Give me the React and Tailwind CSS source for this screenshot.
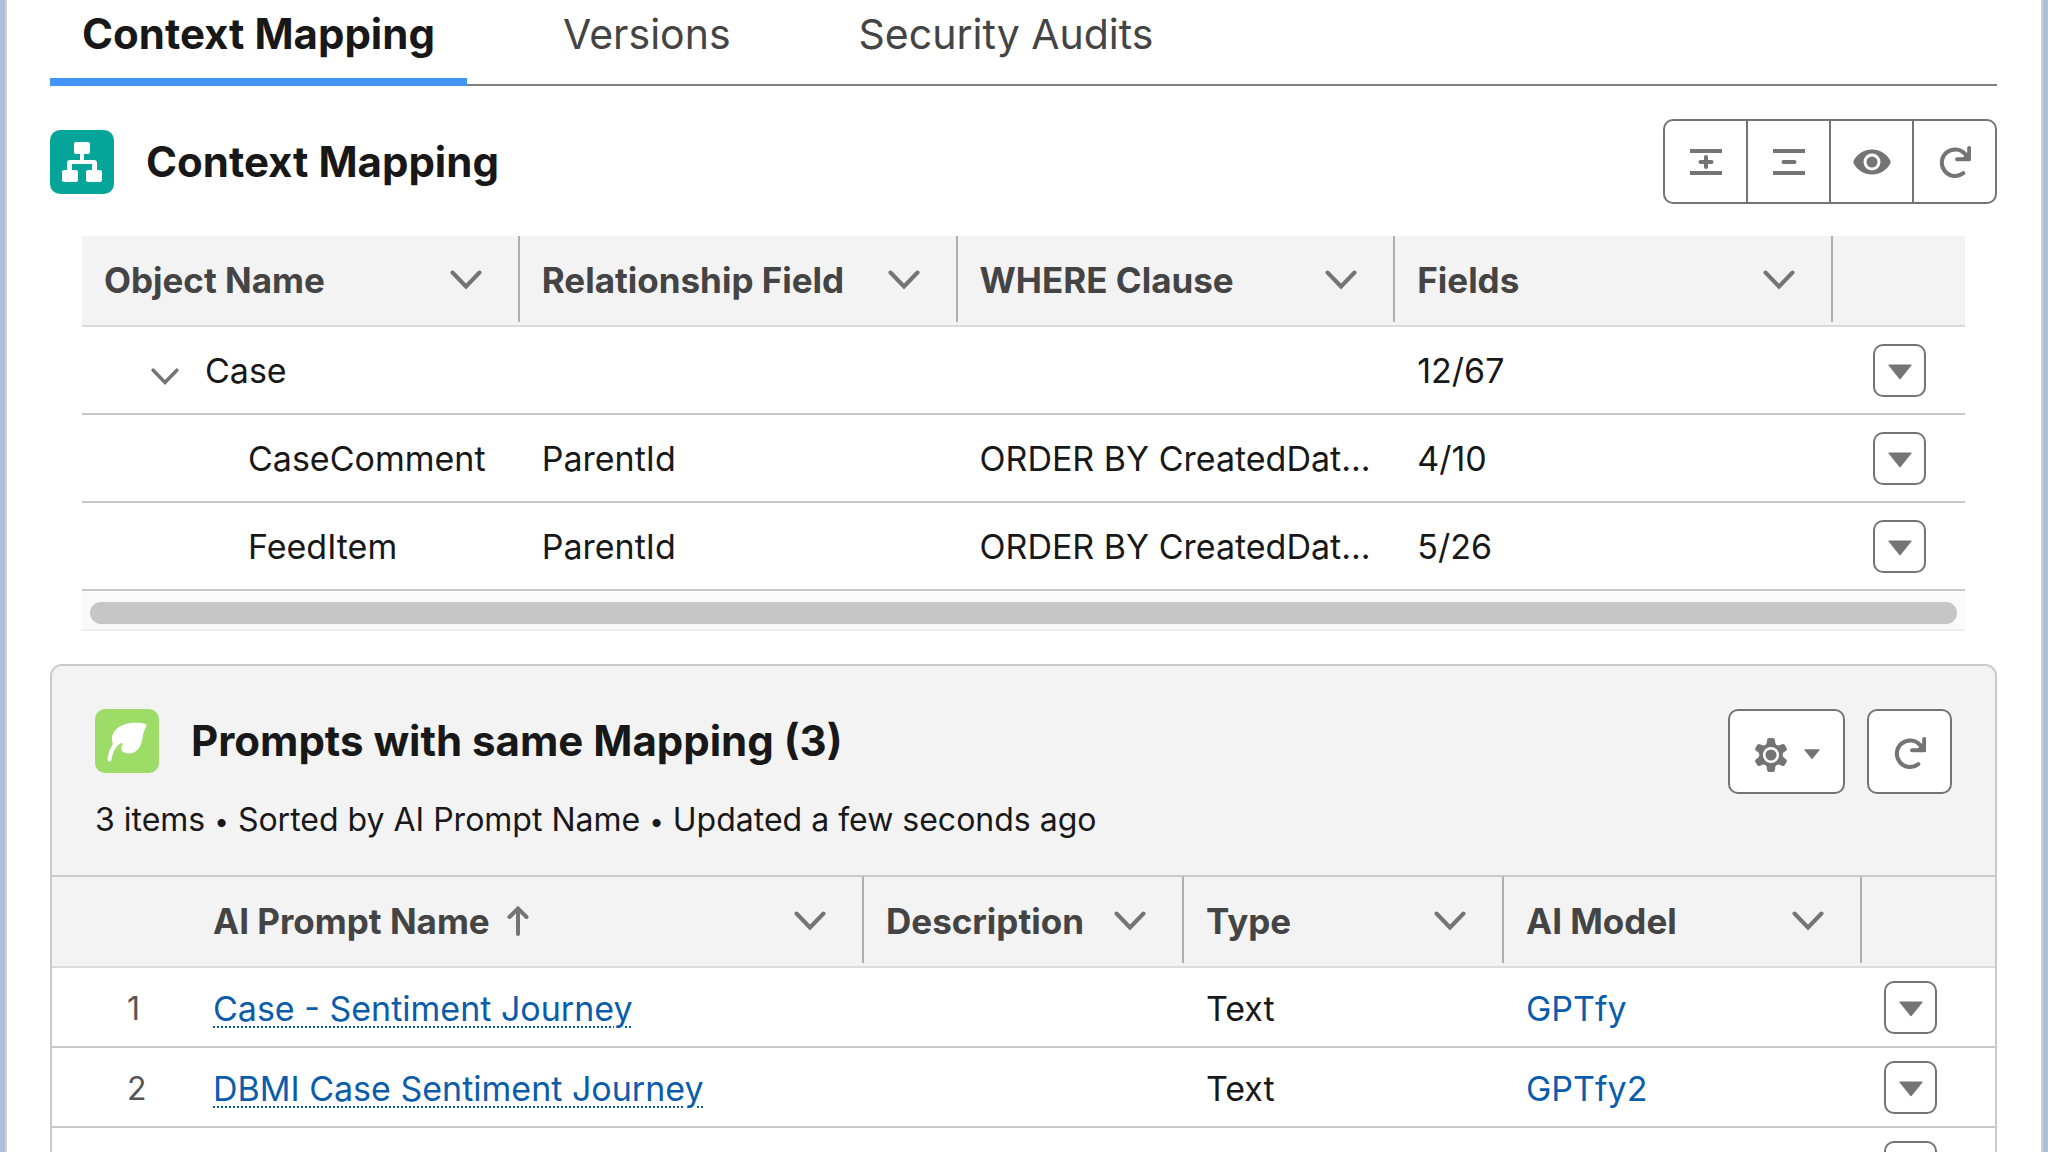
import { useState } from "react";

const tabs = ["Context Mapping", "Versions", "Security Audits"];

const mappingColumns = ["Object Name", "Relationship Field", "WHERE Clause", "Fields"];

const mappingRows = [
  { id: 1, name: "Case", parent: true, relation: "", where: "", fields: "12/67" },
  { id: 2, name: "CaseComment", relation: "ParentId", where: "ORDER BY CreatedDat...", fields: "4/10" },
  { id: 3, name: "FeedItem", relation: "ParentId", where: "ORDER BY CreatedDat...", fields: "5/26" },
];

const promptRows = [
  { id: 1, name: "Case - Sentiment Journey", type: "Text", model: "GPTfy" },
  { id: 2, name: "DBMI Case Sentiment Journey", type: "Text", model: "GPTfy2" },
  { id: 3 },
];

function ChevronIcon({ className = "w-8" }) {
  return (
    <svg viewBox="0 0 32 20" className={`shrink-0 ${className}`} fill="none" stroke="#747474" strokeWidth="4" strokeLinecap="round">
      <path d="M2.5 2.5 16 16.5 29.5 2.5" />
    </svg>
  );
}

function TriangleIcon({ className = "w-6" }) {
  return (
    <svg viewBox="0 0 24 16" className={className} fill="#747474">
      <path d="M1 .5h22q1 0 .4.9L12.8 14.8q-.8.9-1.6 0L.6 1.4Q0 .5 1 .5Z" />
    </svg>
  );
}

function RefreshIcon() {
  return (
    <svg viewBox="0 0 32 32" className="w-8" fill="none" stroke="#747474" strokeWidth="4" strokeLinecap="round">
      <path d="M24.3 27.2A13.3 13.3 0 1 1 26 7.8l3 3.4" />
      <path d="M18 13.2h12M30.2 2v11.2" />
      <path d="M22 13.2 30 5v8Z" fill="#747474" stroke="none" />
    </svg>
  );
}

function ExpandIcon({ plus }) {
  return (
    <svg viewBox="0 0 32 32" className="w-8" fill="none" stroke="#747474" strokeWidth="4">
      <path d="M0 5h32M0 27h32" />
      <path d="M10.5 16h11" strokeLinecap="round" />
      {plus && <path d="M16 11v10" strokeLinecap="round" />}
    </svg>
  );
}

function EyeIcon() {
  return (
    <svg viewBox="0 0 38 26" className="w-[38px]">
      <path d="M.6 11.8C4.2 4.9 11 .5 19 .5s14.8 4.4 18.4 11.3q.6 1.2 0 2.4C33.8 21.1 27 25.5 19 25.5S4.2 21.1.6 14.2q-.6-1.2 0-2.4Z" fill="#747474" />
      <circle cx="19" cy="13" r="7" fill="#747474" stroke="#fff" strokeWidth="3" />
    </svg>
  );
}

function GearIcon() {
  return (
    <svg viewBox="0 0 34 36" className="w-[34px]">
      {[0, 60, 120, 180, 240, 300].map((angle) => (
        <path
          key={angle}
          d="M8.5 10Q13 8.5 13 3.8 13 1 15.5 1h3Q21 1 21 3.8 21 8.5 25.500 10L17 18Z"
          fill="#747474"
          transform={`rotate(${angle} 17 18)`}
        />
      ))}
      <circle cx="17" cy="18" r="11.5" fill="#747474" />
      <circle cx="17" cy="18" r="6.8" fill="#747474" stroke="#fff" strokeWidth="2.6" />
    </svg>
  );
}

function RowMenuButton({ label }) {
  return (
    <button
      aria-label={label}
      className="flex size-[53px] items-center justify-center rounded-[10px] border-2 border-[#747474] bg-white pt-1"
    >
      <TriangleIcon />
    </button>
  );
}

// Header cell with the short divider on its right side
function HeaderCell({ label, sorted }) {
  return (
    <th className="p-0 align-top font-bold">
      <div className="flex h-[86px] items-center border-r-2 border-[#aeaeae] pt-0.5 pr-9 pl-[22px]">
        <span>{label}</span>
        {sorted && (
          <svg viewBox="0 0 24 32" className="ml-4 w-6" fill="none" stroke="#747474" strokeWidth="4" strokeLinecap="round">
            <path d="M12 29V4M3.5 12 12 3.5 20.5 12" />
          </svg>
        )}
        <ChevronIcon className="ml-auto w-8" />
      </div>
    </th>
  );
}

function MappingTable() {
  return (
    <div className="mx-8">
      <table className="w-full table-fixed border-collapse text-left text-[34px] leading-10">
        <colgroup>
          <col />
          <col />
          <col />
          <col />
          <col className="w-[132px]" />
        </colgroup>
        <thead className="bg-[#f3f3f3] text-[35px] text-[#444]">
          <tr className="h-[90px] border-b-2 border-[#dddbda]">
            {mappingColumns.map((column) => (
              <HeaderCell key={column} label={column} />
            ))}
            <th />
          </tr>
        </thead>
        <tbody>
          {mappingRows.map((row) => (
            <tr key={row.id} className="h-[88px] border-b-2 border-[#c9c9c9]">
              <td className="p-0 pt-0.5">
                {row.parent ? (
                  <button className="flex items-center gap-[26px] pl-[69px]" aria-expanded="true">
                    <ChevronIcon className="mt-3 w-7" />
                    {row.name}
                  </button>
                ) : (
                  <span className="pl-[166px]">{row.name}</span>
                )}
              </td>
              <td className="p-0 pt-0.5 pl-[22px]">{row.relation}</td>
              <td className="p-0 pt-0.5 pl-[22px] whitespace-nowrap">{row.where}</td>
              <td className="p-0 pt-0.5 pl-[22px]">{row.fields}</td>
              <td className="p-0 pl-10">
                <RowMenuButton label={`Actions for ${row.name}`} />
              </td>
            </tr>
          ))}
        </tbody>
      </table>

      {/* Horizontal scroll track */}
      <div className="border-b-2 border-[#eeeeee] bg-[#fafafa] px-2 pt-[11px] pb-[5px]">
        <div className="h-[22px] rounded-full bg-[#c6c6c6]" />
      </div>
    </div>
  );
}

function PromptsCard() {
  return (
    <section className="mt-[33px] overflow-hidden rounded-t-[12px] border-2 border-[#c9c9c9]">
      <div className="flex h-[211px] items-start justify-between border-b-2 border-[#c9c9c9] bg-[#f3f3f3] px-[43px] pt-[43px]">
        <div>
          <div className="flex items-center gap-8">
            <div className="flex size-16 items-center justify-center rounded-[10px] bg-[#9edc68]">
              <svg viewBox="0 0 64 64" className="size-16" fill="#fff">
                <path d="M51 15C43 13 29 13 21.5 20 16.5 25 16 30 18 35c-3 4-5 10-5.5 15.5q0 1.9 1.7 2.1 1.7.1 2.2-1.7C17.5 44.5 20 38.5 24.5 35q2.3-1.7 3-.7.5 1-.8 3C25 41 28 44.5 34 44.5 43 44.5 47 36 48 26c.4-4 3-7 3.7-10Z" />
              </svg>
            </div>
            <h2 className="text-[42px] leading-[52px] font-bold">Prompts with same Mapping (3)</h2>
          </div>
          <p className="mt-[27px] text-[32px] leading-10">
            3 items <span className="text-[26px]">•</span> Sorted by AI Prompt Name <span className="text-[26px]">•</span> Updated a few seconds ago
          </p>
        </div>
        <div className="flex gap-[22px]">
          <button aria-label="List view controls" className="flex h-[85px] w-[117px] items-center justify-center gap-4 rounded-[10px] border-2 border-[#747474] bg-white pt-1.5">
            <GearIcon />
            <TriangleIcon className="w-4" />
          </button>
          <button aria-label="Refresh prompts" className="flex size-[85px] items-center justify-center rounded-[10px] border-2 border-[#747474] bg-white pt-0.5">
            <RefreshIcon />
          </button>
        </div>
      </div>

      <table className="w-full table-fixed border-collapse text-left text-[34px] leading-10">
        <colgroup>
          <col className="w-[139px]" />
          <col />
          <col className="w-[320px]" />
          <col className="w-[320px]" />
          <col className="w-[358px]" />
          <col className="w-[133px]" />
        </colgroup>
        <thead className="bg-[#f3f3f3] text-[35px] text-[#444]">
          <tr className="h-[90px] border-b-2 border-[#dddbda]">
            <th />
            <HeaderCell label="AI Prompt Name" sorted />
            <HeaderCell label="Description" />
            <HeaderCell label="Type" />
            <HeaderCell label="AI Model" />
            <th />
          </tr>
        </thead>
        <tbody>
          {promptRows.map((row) => (
            <tr key={row.id} className="h-20 border-b-2 border-[#c9c9c9]">
              <td className="p-0 pt-1 pl-[75px] text-[32px] text-[#555]">{row.name && row.id}</td>
              <td className="p-0 pt-1 pl-[22px]">
                {row.name && (
                  <a href="#" className="text-[#0b5cab] underline decoration-dotted decoration-2 underline-offset-[5px]">
                    {row.name}
                  </a>
                )}
              </td>
              <td />
              <td className="p-0 pt-1 pl-[22px]">{row.type}</td>
              <td className="p-0 pt-1 pl-[22px]">
                {row.model && (
                  <a href="#" className="text-[#0b5cab]">
                    {row.model}
                  </a>
                )}
              </td>
              <td className="p-0 pl-[22px]">
                <RowMenuButton label="Prompt actions" />
              </td>
            </tr>
          ))}
        </tbody>
      </table>
    </section>
  );
}

function App() {
  const [activeTab, setActiveTab] = useState("Context Mapping");

  return (
    <div className="h-screen overflow-hidden border-x-[5px] border-[#aebfdb] bg-white font-['Inter',sans-serif] text-[#181818]">
      <main className="border-x-2 border-[#d0d0d0] pr-11 pl-[43px]">
        {/* Tabs */}
        <nav className="flex h-[86px] gap-16 border-b-2 border-[#808080]">
          {tabs.map((tab) => (
            <button
              key={tab}
              onClick={() => setActiveTab(tab)}
              className={
                activeTab === tab
                  ? "-mb-0.5 border-b-8 border-[#4394f8] px-8 pb-2.5 text-[42px] leading-[52px] font-bold"
                  : "px-8 pb-4 text-[41px] leading-[52px] text-[#444]"
              }
            >
              {tab}
            </button>
          ))}
        </nav>

        <div className="flex items-center justify-between pt-[33px] pb-8">
          <div className="flex items-center gap-8">
            <div className="flex size-16 items-center justify-center rounded-[10px] bg-[#06a59a]">
              <svg viewBox="0 0 64 64" className="size-16" fill="#fff">
                <rect x="24" y="12" width="16" height="12" rx="2" />
                <rect x="12" y="40" width="16" height="12" rx="2" />
                <rect x="36" y="40" width="16" height="12" rx="2" />
                <path d="M30 24h4v6h10q3 0 3 3v8h-5v-7H22v7h-5v-8q0-3 3-3h10Z" />
              </svg>
            </div>
            <h1 className="text-[42px] leading-[52px] font-bold">Context Mapping</h1>
          </div>
          <div className="flex h-[85px] divide-x-2 divide-[#747474] overflow-hidden rounded-[10px] border-2 border-[#747474]">
            <button aria-label="Expand all" className="flex w-[83px] items-center justify-center">
              <ExpandIcon plus />
            </button>
            <button aria-label="Collapse all" className="flex w-[83px] items-center justify-center">
              <ExpandIcon />
            </button>
            <button aria-label="Preview" className="flex w-[83px] items-center justify-center">
              <EyeIcon />
            </button>
            <button aria-label="Refresh mapping" className="flex w-[81px] items-center justify-center">
              <RefreshIcon />
            </button>
          </div>
        </div>

        <MappingTable />
        <PromptsCard />
      </main>
    </div>
  );
}

export default App;
